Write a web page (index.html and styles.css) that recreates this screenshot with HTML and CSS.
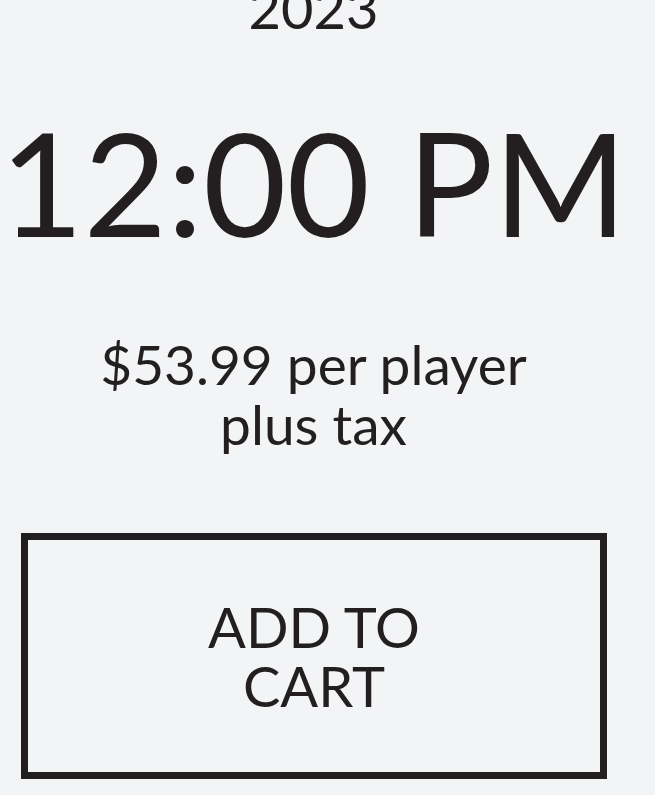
FILE: index.html
```html
<!DOCTYPE html>
<html lang="en">
<head>
    <meta charset="UTF-8">
    <meta name="viewport" content="width=device-width, initial-scale=1.0">
    <title>Tee Time</title>
    <link rel="stylesheet" href="styles.css">
</head>
<body>
    <div class="screen">
        <div class="slot">
            <div class="year">2023</div>
            <div class="time">12:00 PM</div>
            <div class="price">
                <span>$53.99 per player</span>
                <span>plus tax</span>
            </div>
            <button class="cart-btn">ADD TO<br>CART</button>
        </div>
    </div>
</body>
</html>
```

FILE: styles.css
```css
body {
    margin: 0;
    background-color: #ffffff;
    font-family: Lato, "Open Sans", sans-serif;
    color: #231f20;
}
.screen {
    height: 795px;
    background-color: #f2f4f6;
    overflow: hidden;
}
.slot {
    width: 627px;
    text-align: center;
}
.year {
    font-size: 56px;
    line-height: 56px;
    margin-top: -20px;
}
.time {
    font-size: 144px;
    line-height: 150px;
    margin-top: 71px;
    white-space: nowrap;
}
.price {
    display: flex;
    flex-direction: column;
    align-items: center;
    font-size: 55px;
    line-height: 60px;
    margin-top: 77px;
}
.cart-btn {
    display: flex;
    align-items: center;
    justify-content: center;
    box-sizing: border-box;
    width: 586px;
    height: 246px;
    margin: 79px 0 0 21px;
    border: 7px solid #231f20;
    background: transparent;
    color: #231f20;
    font-family: inherit;
    font-size: 56px;
    line-height: 59px;
    padding: 0;
}
```
